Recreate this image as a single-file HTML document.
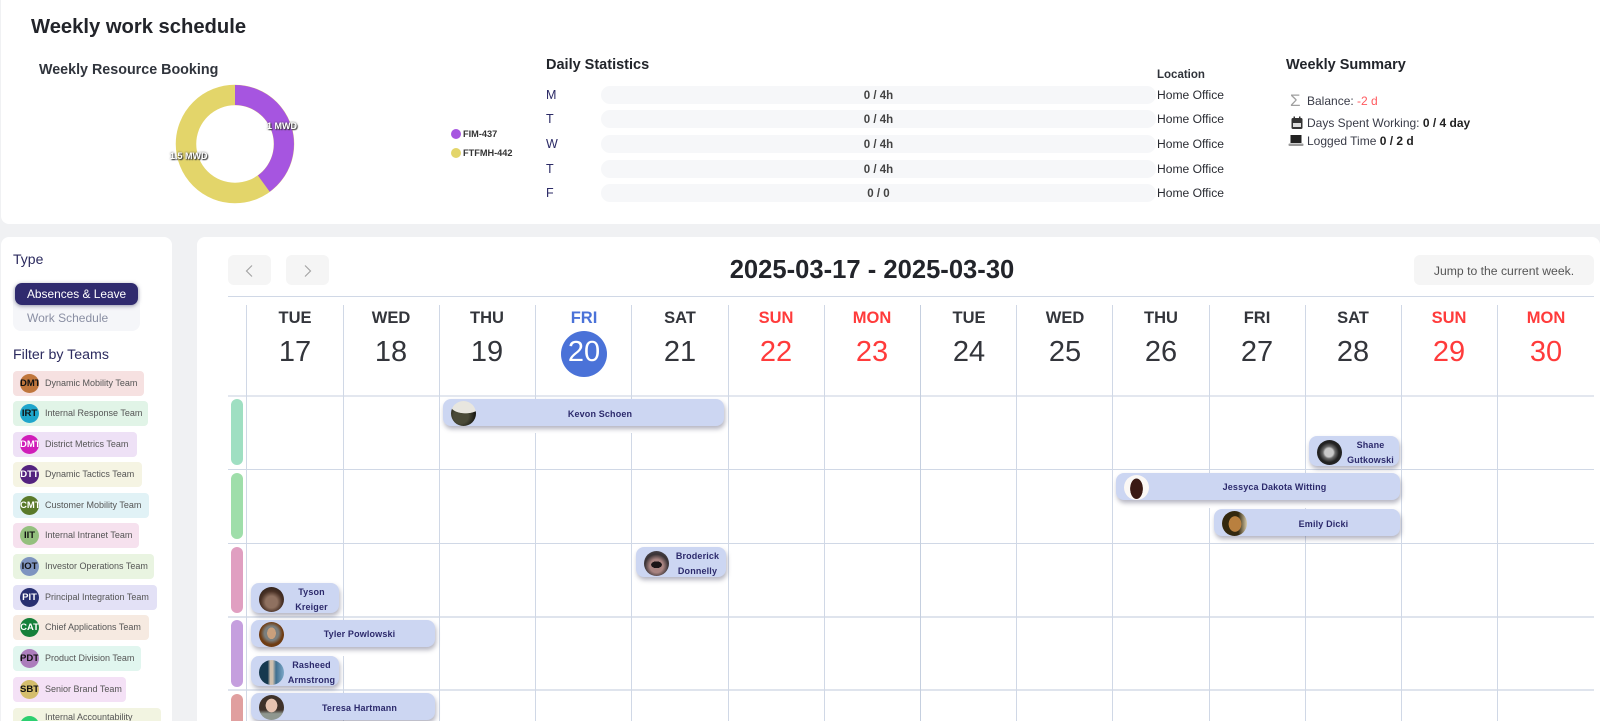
<!DOCTYPE html>
<html lang="en">
<head>
<meta charset="utf-8">
<title>Weekly work schedule</title>
<style>
html,body{margin:0;padding:0;width:1600px;height:721px;overflow:hidden;background:#f0f1f3;font-family:"Liberation Sans",sans-serif;color:#222}
*{box-sizing:border-box}
#p{position:relative;width:1600px;height:721px;overflow:hidden}
.a{position:absolute;white-space:nowrap}
.card{position:absolute;background:#fff;border-radius:8px}
.h{font-weight:bold;font-size:14.5px;color:#22252b;line-height:18px}
.d{font-size:12.5px;color:#2b2a66;left:546px;line-height:16px}
.bar{position:absolute;left:601px;width:555px;height:18px;border-radius:9px;background:#f6f7f9;text-align:center;font:bold 11.5px/20px "Liberation Sans",sans-serif;color:#444}
.loc{font-size:12.1px;color:#2a2c33;left:1157px;line-height:16px}
.s{font-size:12px;color:#3a3c48;left:1307px;line-height:16px}
.s b{color:#222}
.chip{position:absolute;left:13px;height:25px;border-radius:4px;font-size:9px;color:#555;line-height:25px;padding-left:32px;white-space:nowrap}
.chip i{position:absolute;left:7px;top:3px;width:19px;height:19px;border-radius:50%;font:bold 9.5px/19px "Liberation Sans",sans-serif;text-align:center;overflow:hidden}
.v{position:absolute;top:305px;width:1px;height:416px;background:#d0d8e6}
.l{position:absolute;left:228px;width:1366px;height:1px;background:#d0d8e6}
.bn{position:absolute;width:12px;border-radius:6px;left:231px}
.dn{position:absolute;top:308px;width:96px;text-align:center;font:bold 16.5px/20px "Liberation Sans",sans-serif;color:#33353b}
.nm{position:absolute;top:335px;width:96px;text-align:center;font:29px/34px "Liberation Sans",sans-serif;color:#33353b}
.r{color:#ff3b3b}
.w{position:absolute;background:#fff}
.e{position:absolute;height:27px;background:#ccd6f2;border-radius:8px;box-shadow:1px 3px 5px rgba(70,70,100,.4);display:flex;align-items:center;overflow:hidden}
.e.t{height:30px}
.e>span{position:relative;top:1.5px;flex:1;text-align:center;font:bold 9px/15px "Liberation Sans",sans-serif;color:#2c2a6c;letter-spacing:.15px}
.e>i{position:relative;top:1px;flex:none;width:25px;height:25px;border-radius:50%;margin-left:8px;display:block}
</style>
</head>
<body>
<div id="p">

<!-- top card -->
<div class="card" style="left:1px;top:0;width:1599px;height:224px;border-radius:0 0 0 8px"></div>
<div class="a" style="left:31px;top:14px;font:bold 20.2px/26px 'Liberation Sans',sans-serif;color:#22242a">Weekly work schedule</div>
<div class="a h" style="left:39px;top:60.5px;color:#30343c;font-size:14.3px">Weekly Resource Booking</div>

<svg class="a" style="left:170px;top:80px" width="130" height="130" viewBox="0 0 130 130">
<circle cx="65" cy="64" r="49" fill="none" stroke="#e3d56a" stroke-width="20.5"/>
<path d="M65 5A59 59 0 0 1 99.7 111.7L87.9 95.5A39 39 0 0 0 65 25Z" fill="#a655e0"/>
</svg>
<div class="a" style="left:267px;top:120px;font:bold 9px/12px 'Liberation Sans',sans-serif;color:#fff;text-shadow:1px 1px 1px #333,0 0 2px #444">1 MWD</div>
<div class="a" style="left:170px;top:150px;font:bold 9px/12px 'Liberation Sans',sans-serif;color:#fff;text-shadow:1px 1px 1px #333,0 0 2px #444">1.5 MWD</div>

<div class="a" style="left:451px;top:129px;width:10px;height:10px;border-radius:50%;background:#a655e0"></div>
<div class="a" style="left:463px;top:128px;font:bold 9.2px/12px 'Liberation Sans',sans-serif;color:#333">FIM-437</div>
<div class="a" style="left:451px;top:148px;width:10px;height:10px;border-radius:50%;background:#e3d56a"></div>
<div class="a" style="left:463px;top:147px;font:bold 9.2px/12px 'Liberation Sans',sans-serif;color:#333">FTFMH-442</div>

<div class="a h" style="left:546px;top:56px">Daily Statistics</div>
<div class="a d" style="top:87px">M</div>
<div class="a d" style="top:111px">T</div>
<div class="a d" style="top:136px">W</div>
<div class="a d" style="top:161px">T</div>
<div class="a d" style="top:185px">F</div>
<div class="bar" style="top:86px">0 / 4h</div>
<div class="bar" style="top:110px">0 / 4h</div>
<div class="bar" style="top:135px">0 / 4h</div>
<div class="bar" style="top:160px">0 / 4h</div>
<div class="bar" style="top:184px">0 / 0</div>
<div class="a" style="left:1157px;top:66.5px;font:bold 11.5px/16px 'Liberation Sans',sans-serif;color:#30333a">Location</div>
<div class="a loc" style="top:87px">Home Office</div>
<div class="a loc" style="top:111px">Home Office</div>
<div class="a loc" style="top:136px">Home Office</div>
<div class="a loc" style="top:161px">Home Office</div>
<div class="a loc" style="top:185px">Home Office</div>

<div class="a h" style="left:1286px;top:56px">Weekly Summary</div>
<div class="a" style="left:1290px;top:92px;font-size:17px;line-height:18px;color:#a0a0a0">&#931;</div>
<div class="a s" style="top:93px">Balance: <span style="color:#ff5a5f">-2 d</span></div>
<svg class="a" style="left:1290px;top:116px" width="14" height="14" viewBox="0 0 14 14"><rect x="1.5" y="2" width="11" height="11" rx="1.5" fill="#333"/><rect x="3" y="7" width="8" height="4" fill="#ddd"/><rect x="3.5" y="0.5" width="1.5" height="3" fill="#333"/><rect x="9" y="0.5" width="1.5" height="3" fill="#333"/></svg>
<div class="a s" style="top:115px">Days Spent Working: <b>0 / 4 day</b></div>
<svg class="a" style="left:1288px;top:134px" width="16" height="13" viewBox="0 0 16 13"><rect x="2.5" y="1" width="11" height="8" fill="#222"/><rect x="0.5" y="9.5" width="15" height="2.5" rx="1" fill="#999"/></svg>
<div class="a s" style="top:133px">Logged Time <b>0 / 2 d</b></div>

<!-- left card -->
<div class="card" style="left:1px;top:237px;width:171px;height:500px"></div>
<div class="a" style="left:13px;top:250px;font-size:14px;line-height:18px;color:#2b2a5e">Type</div>
<div class="a" style="left:13px;top:283px;width:127px;height:48px;border-radius:8px;background:#f5f6f9"></div>
<div class="a" style="left:14.5px;top:283px;width:123px;height:22px;border-radius:7px;background:#2f2a6e;box-shadow:0 1px 4px rgba(50,50,90,.5)"></div>
<div class="a" style="left:27px;top:286px;font-size:11.9px;line-height:16px;color:#fff">Absences &amp; Leave</div>
<div class="a" style="left:27px;top:310px;font-size:12px;line-height:16px;color:#8a8fa3">Work Schedule</div>
<div class="a" style="left:13px;top:346px;font-size:14.2px;line-height:18px;color:#2b2a5e">Filter by Teams</div>

<div class="chip" style="top:370.5px;width:131px;background:#f6e1e1">Dynamic Mobility Team<i style="background:#c0763c;color:#111">DMT</i></div>
<div class="chip" style="top:401px;width:135px;background:#e1f4e7">Internal Response Team<i style="background:#1fa6cc;color:#111">IRT</i></div>
<div class="chip" style="top:432px;width:124px;background:#eee1f6">District Metrics Team<i style="background:#d01db9;color:#fff">DMT</i></div>
<div class="chip" style="top:462px;width:129px;background:#f5f4e3">Dynamic Tactics Team<i style="background:#53227f;color:#fff">DTT</i></div>
<div class="chip" style="top:493px;width:136px;background:#e1f2f6">Customer Mobility Team<i style="background:#5a7a2a;color:#fff">CMT</i></div>
<div class="chip" style="top:523px;width:126px;background:#f6e1ee">Internal Intranet Team<i style="background:#94c07e;color:#111">IIT</i></div>
<div class="chip" style="top:554px;width:141px;background:#e9f4e1">Investor Operations Team<i style="background:#7e94c0;color:#111">IOT</i></div>
<div class="chip" style="top:585px;width:144px;background:#e3e1f6">Principal Integration Team<i style="background:#283070;color:#fff">PIT</i></div>
<div class="chip" style="top:615px;width:136px;background:#f6eae1">Chief Applications Team<i style="background:#15803a;color:#fff">CAT</i></div>
<div class="chip" style="top:646px;width:128px;background:#e1f6ef">Product Division Team<i style="background:#ac7dbc;color:#111">PDT</i></div>
<div class="chip" style="top:677px;width:113px;background:#f4e1f6">Senior Brand Team<i style="background:#d4bd6c;color:#111">SBT</i></div>
<div class="chip" style="top:708px;width:148px;height:40px;background:#f2f4e1;line-height:11px;padding-top:4px;padding-right:12px;white-space:normal">Internal Accountability Team<i style="background:#2ccf70;color:#111;top:8px">IAT</i></div>

<!-- calendar card -->
<div class="card" style="left:197px;top:237px;width:1403px;height:500px"></div>
<div class="a" style="left:228px;top:255px;width:43px;height:30px;border-radius:6px;background:#f5f5f5"></div>
<div class="a" style="left:286px;top:255px;width:43px;height:30px;border-radius:6px;background:#f5f5f5"></div>
<svg class="a" style="left:228px;top:255px" width="101" height="30" viewBox="0 0 101 30" fill="none" stroke="#a5a5a5" stroke-width="1.2"><path d="M24 10.5L18.5 16L24 21.5"/><path d="M77 10.5L82.5 16L77 21.5"/></svg>
<div class="a" style="left:672px;top:254px;width:400px;text-align:center;font:bold 25.6px/32px 'Liberation Sans',sans-serif;color:#22242a">2025-03-17 - 2025-03-30</div>
<div class="a" style="left:1414px;top:255px;width:180px;height:30px;border-radius:6px;background:#f5f5f5;text-align:center;font-size:12.2px;line-height:32px;color:#555">Jump to the current week.</div>

<!-- grid lines -->
<div class="l" style="top:296px"></div>
<div class="l" style="top:395px;height:2px;background:#e3e7ef"></div>
<div class="l" style="top:469px"></div>
<div class="l" style="top:543px"></div>
<div class="l" style="top:616px;height:2px;background:#dfe4ed"></div>
<div class="l" style="top:689px;height:2px;background:#dfe4ed"></div>

<div class="v" style="left:246px"></div>
<div class="v" style="left:343px"></div>
<div class="v" style="left:439px"></div>
<div class="v" style="left:535px"></div>
<div class="v" style="left:631px"></div>
<div class="v" style="left:728px"></div>
<div class="v" style="left:824px"></div>
<div class="v" style="left:920px;background:#c5cfdf"></div>
<div class="v" style="left:1016px"></div>
<div class="v" style="left:1112px"></div>
<div class="v" style="left:1209px"></div>
<div class="v" style="left:1305px"></div>
<div class="v" style="left:1401px"></div>
<div class="v" style="left:1497px"></div>

<!-- side colour bars -->
<div class="bn" style="top:399px;height:66px;background:#9fdfc2"></div>
<div class="bn" style="top:473px;height:66px;background:#9fdeaa"></div>
<div class="bn" style="top:547px;height:66px;background:#e09fc1"></div>
<div class="bn" style="top:620px;height:67px;background:#c59fde"></div>
<div class="bn" style="top:694px;height:40px;background:#e09f9f"></div>

<!-- day headers -->
<div class="dn" style="left:247px">TUE</div><div class="nm" style="left:247px">17</div>
<div class="dn" style="left:343px">WED</div><div class="nm" style="left:343px">18</div>
<div class="dn" style="left:439px">THU</div><div class="nm" style="left:439px">19</div>
<div class="dn" style="left:536px;color:#4a72d8">FRI</div>
<div class="a" style="left:561px;top:331px;width:46px;height:46px;border-radius:50%;background:#4a72d8"></div>
<div class="nm" style="left:536px;color:#fff">20</div>
<div class="dn" style="left:632px">SAT</div><div class="nm" style="left:632px">21</div>
<div class="dn r" style="left:728px">SUN</div><div class="nm r" style="left:728px">22</div>
<div class="dn r" style="left:824px">MON</div><div class="nm r" style="left:824px">23</div>
<div class="dn" style="left:921px">TUE</div><div class="nm" style="left:921px">24</div>
<div class="dn" style="left:1017px">WED</div><div class="nm" style="left:1017px">25</div>
<div class="dn" style="left:1113px">THU</div><div class="nm" style="left:1113px">26</div>
<div class="dn" style="left:1209px">FRI</div><div class="nm" style="left:1209px">27</div>
<div class="dn" style="left:1305px">SAT</div><div class="nm" style="left:1305px">28</div>
<div class="dn r" style="left:1401px">SUN</div><div class="nm r" style="left:1401px">29</div>
<div class="dn r" style="left:1498px">MON</div><div class="nm r" style="left:1498px">30</div>

<!-- white strips interrupting grid under events -->
<div class="w" style="left:443px;top:426px;width:281px;height:7px"></div>
<div class="w" style="left:1116px;top:499px;width:284px;height:9px"></div>
<div class="w" style="left:251px;top:646px;width:184px;height:10px"></div>

<!-- events -->
<div class="e" style="left:443px;top:399px;width:281px"><i style="background:radial-gradient(ellipse 60% 30% at 58% 20%,#e8e6df 0 95%,transparent 100%),radial-gradient(circle at 40% 60%,#4a4a38 0 35%,#14140f 70%)"></i><span>Kevon Schoen</span></div>
<div class="e t" style="left:1309px;top:436px;width:90px"><i style="background:radial-gradient(circle at 48% 50%,#c8c8c8 0 24%,#6a6a6a 34%,#222 55%)"></i><span>Shane Gutkowski</span></div>
<div class="e" style="left:1116px;top:472.5px;width:284px"><i style="background:radial-gradient(ellipse 26% 42% at 50% 55%,#3a1a14 0 95%,transparent 100%),#fbf8f5"></i><span>Jessyca Dakota Witting</span></div>
<div class="e" style="left:1214px;top:509px;width:186px"><i style="background:radial-gradient(ellipse 26% 32% at 52% 52%,#b9803f 0 95%,transparent 100%),linear-gradient(90deg,#33280f 0 65%,#d9ccaa)"></i><span>Emily Dicki</span></div>
<div class="e t" style="left:636px;top:547px;width:90px"><i style="background:radial-gradient(ellipse 22% 14% at 50% 55%,#1a1416 0 95%,transparent 100%),radial-gradient(circle at 50% 60%,#a98481 0 34%,#3a3336 60%,#55525a 100%)"></i><span>Broderick Donnelly</span></div>
<div class="e t" style="left:251px;top:583px;width:88px"><i style="background:radial-gradient(circle at 50% 60%,#8f7160 0 30%,#4a3226 55%,#1c1512 100%)"></i><span>Tyson Kreiger</span></div>
<div class="e" style="left:251px;top:619.5px;width:184px"><i style="background:radial-gradient(ellipse 18% 24% at 50% 45%,#c9a07c 0 95%,transparent 100%),radial-gradient(circle at 50% 45%,#7a7f7e 0 38%,#6f3d14 60%)"></i><span>Tyler Powlowski</span></div>
<div class="e t" style="left:251px;top:656px;width:88px"><i style="background:linear-gradient(90deg,#16394f 0 35%,#cdbfae 45% 55%,#3f6f90 68%,#7ba7c7)"></i><span>Rasheed Armstrong</span></div>
<div class="e" style="left:251px;top:693px;width:184px"><i style="background:radial-gradient(ellipse 24% 28% at 50% 42%,#e6c3b0 0 95%,transparent 100%),linear-gradient(#3f322a 0 60%,#8f978f 75%)"></i><span>Teresa Hartmann</span></div>

</div>
</body>
</html>
